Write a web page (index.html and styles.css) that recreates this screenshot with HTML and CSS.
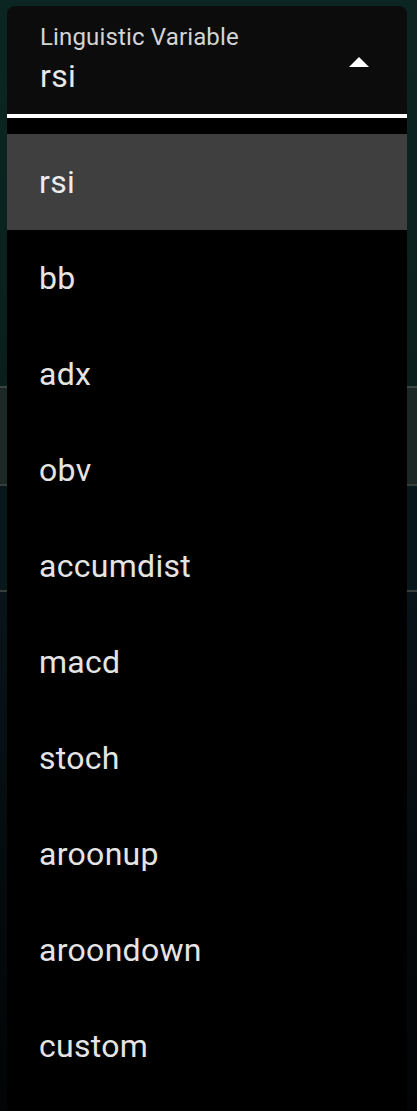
FILE: index.html
```html
<!DOCTYPE html>
<html lang="en">
<head>
<meta charset="utf-8">
<title>Linguistic Variable</title>
<link rel="stylesheet" href="styles.css">
</head>
<body>
<div class="page">
  <div class="field">
    <div class="field-text">
      <div class="label">Linguistic Variable</div>
      <div class="value">rsi</div>
    </div>
    <svg class="arrow" viewBox="0 0 24 24" width="48" height="48" aria-hidden="true"><path d="M7 14l5-5 5 5z" fill="#ffffff"/></svg>
  </div>
  <div class="backdrop-rows">
    <div class="brow brow-light"></div>
    <div class="brow"></div>
    <div class="brow brow-last"></div>
  </div>
</div>
<ul class="menu">
  <li class="item selected">rsi</li>
  <li class="item">bb</li>
  <li class="item">adx</li>
  <li class="item">obv</li>
  <li class="item">accumdist</li>
  <li class="item">macd</li>
  <li class="item">stoch</li>
  <li class="item">aroonup</li>
  <li class="item">aroondown</li>
  <li class="item">custom</li>
</ul>
</body>
</html>
```
FILE: styles.css
```css
html, body {
  margin: 0;
  padding: 0;
}
body {
  width: 417px;
  height: 1111px;
  overflow: hidden;
  position: relative;
  font-family: Roboto, "Liberation Sans", Arial, sans-serif;
  background: linear-gradient(180deg, #0b2622 0%, #0a201d 30%, #071614 55%, #040a0b 80%, #020405 100%);
}
.page {
  padding: 6px 10px 0 7px;
}
.field {
  width: 400px;
  height: 108px;
  background: #0c0c0c;
  border-radius: 8px 8px 0 0;
  border-bottom: 4px solid #ffffff;
  display: flex;
  align-items: flex-start;
  justify-content: space-between;
  box-sizing: content-box;
}
.field-text {
  padding: 19px 0 0 33px;
}
.label {
  font-size: 24px;
  line-height: 24px;
  color: #d4d4d4;
  letter-spacing: 0.15px;
}
.value {
  font-size: 32px;
  line-height: 38px;
  color: #e8e8e8;
  margin-top: 8px;
  letter-spacing: 0.3px;
}
.arrow {
  display: block;
  margin: 33px 24px 0 0;
}
.backdrop-rows {
  margin: 268px -10px 0 -7px;
}
.brow {
  height: 104px;
  border-top: 2px solid #343f3d;
  background: #07171a;
}
.brow-light {
  height: 96px;
  background: #1c2826;
  border-top-color: #3a4543;
}
.brow-last {
  height: 520px;
  background: linear-gradient(180deg, #08141a 0%, #040a0c 60%, #020405 100%);
}
.menu {
  position: absolute;
  top: 118px;
  left: 7px;
  width: 400px;
  margin: 0;
  padding: 16px 0;
  list-style: none;
  background: #000000;
}
.item {
  height: 96px;
  display: flex;
  align-items: center;
  padding-left: 32px;
  font-size: 32px;
  line-height: 48px;
  letter-spacing: 0.3px;
  color: #e4e4e4;
}
.selected {
  background: #3f3f3f;
  color: #ececec;
}
```
